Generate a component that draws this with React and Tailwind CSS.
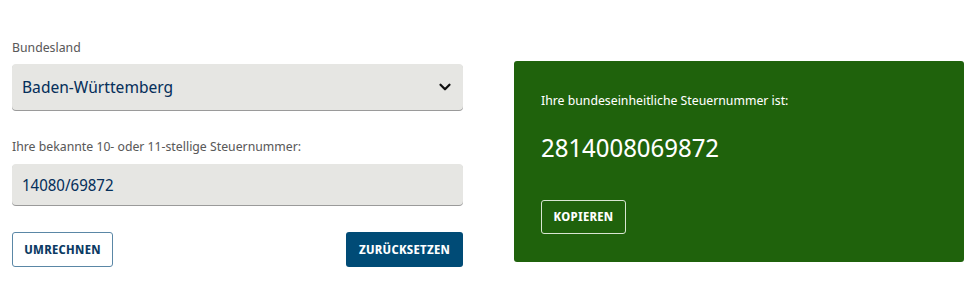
import { ChevronDown } from 'lucide-react'

const font = { fontFamily: '"Noto Sans Display", "Noto Sans", sans-serif' }

export default function App() {
  return (
    <div className="h-[283px] w-[980px] bg-white" style={font}>
      <div className="flex gap-[51px] pl-3 pt-[38px] pr-4">
        {/* Formular */}
        <div className="flex w-[451px] flex-col">
          <label className="text-[13px] leading-[18px] text-[#5a5a5a]">Bundesland</label>
          <div className="mt-[8px] flex h-[46px] items-center justify-between rounded-[4px] bg-[#e6e6e3] pl-[10px] pr-[9px] shadow-[0_1px_0_#9a9a9a]">
            <span className="text-[16.5px] text-[#06305b]">Baden-Württemberg</span>
            <ChevronDown size={18} strokeWidth={3} className="text-[#111]" />
          </div>

          <label className="mt-[27px] text-[13px] leading-[18px] text-[#5a5a5a]">
            Ihre bekannte 10- oder 11-stellige Steuernummer:
          </label>
          <div className="mt-[9px] flex h-[41px] items-center rounded-[4px] bg-[#e6e6e3] pl-[10px] shadow-[0_1px_0_#9a9a9a]">
            <span className="text-[16px] text-[#06305b]">14080/69872</span>
          </div>

          <div className="mt-[27px] flex justify-between">
            <button className="h-[35px] w-[101px] rounded-[3px] border border-[#5a87a6] bg-white text-[12px] font-bold tracking-[0.3px] text-[#0b3a63]">
              UMRECHNEN
            </button>
            <button className="h-[35px] w-[117px] rounded-[3px] bg-[#004b76] text-[12px] font-bold tracking-[0.3px] text-white">
              ZURÜCKSETZEN
            </button>
          </div>
        </div>

        {/* Ergebnis */}
        <div className="mt-[23px] flex h-[201px] w-[450px] flex-col rounded-[3px] bg-[#1f620c] pl-[27px] pt-[30px]">
          <p className="text-[13px] leading-[18px] text-white">Ihre bundeseinheitliche Steuernummer ist:</p>
          <p className="mt-[22px] text-[25.5px] leading-[32px] text-white">2814008069872</p>
          <button className="mt-[37px] h-[34px] w-[85px] rounded-[3px] border border-[#d8e6d2] text-[12px] font-bold tracking-[0.3px] text-white">
            KOPIEREN
          </button>
        </div>
      </div>
    </div>
  )
}
